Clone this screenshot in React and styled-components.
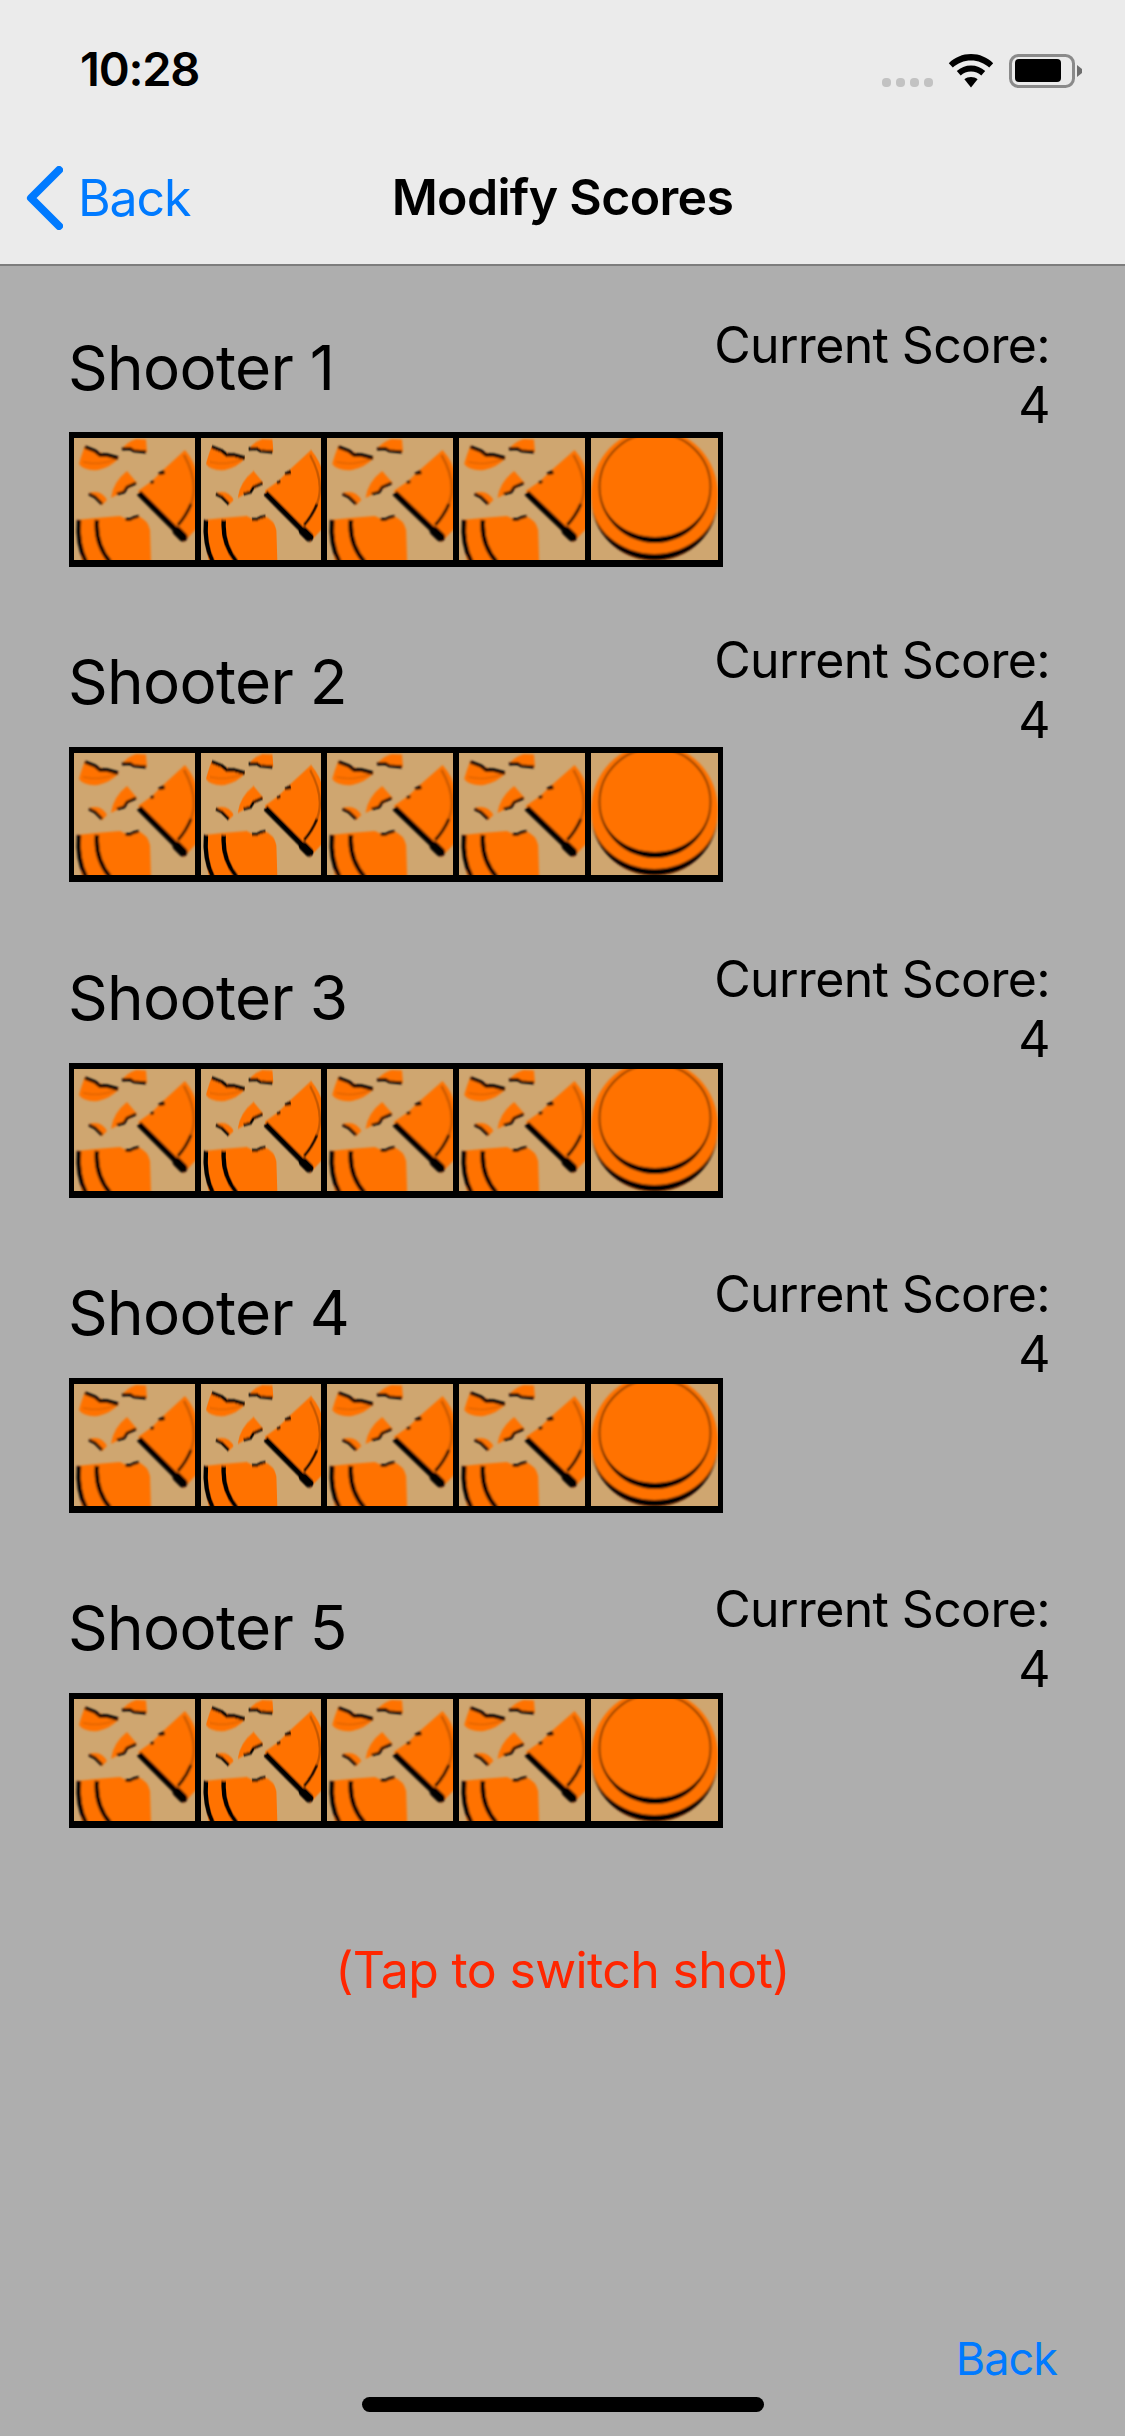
import React from "react";
import styled, { createGlobalStyle } from "styled-components";

const Global = createGlobalStyle`
  html, body { margin: 0; padding: 0; background: #aeaeae; }
  body { font-family: "Inter", "Liberation Sans", sans-serif; }
`;

const Screen = styled.div`
  position: relative;
  width: 1125px;
  height: 2436px;
  display: flex;
  flex-direction: column;
  background: #aeaeae;
  overflow: hidden;
`;
const TopBars = styled.header`
  background: #ebebeb;
  border-bottom: 2px solid #7d7d7d;
  height: 264px;
  box-sizing: content-box;
  display: flex;
  flex-direction: column;
`;
const StatusBar = styled.div`
  height: 132px;
  display: flex;
  align-items: center;
  justify-content: space-between;
  padding: 5px 43px 0 80px;
  box-sizing: border-box;
`;
const Time = styled.span`
  font-size: 47px;
  font-weight: 600;
  letter-spacing: -1.2px;
  color: #000;
`;
const StatusIcons = styled.div`
  display: flex;
  align-items: flex-end;
  gap: 15px;
  margin-top: 5px;
`;
const Dots = styled.div`
  display: flex;
  gap: 5px;
  margin-bottom: 1px;
`;
const Dot = styled.i`
  width: 9px;
  height: 9px;
  border-radius: 4px;
  background: #c2c2c2;
`;
const NavBar = styled.nav`
  position: relative;
  flex: 1;
  display: flex;
  align-items: center;
  justify-content: center;
  padding-top: 2px;
  padding-bottom: 4px;
`;
const NavBack = styled.div`
  position: absolute;
  left: 26px;
  top: 34px;
  display: flex;
  align-items: center;
  gap: 15px;
  color: #007aff;
  font-size: 50px;
  letter-spacing: -1.1px;
`;
const Title = styled.h1`
  margin: 0;
  font-size: 50px;
  font-weight: 600;
  letter-spacing: -0.65px;
  color: #000;
`;
const Rows = styled.main`
  display: flex;
  flex-direction: column;
  gap: 63.25px;
  padding: 49px 75px 0 69px;
`;
const Row = styled.section`
  display: flex;
  flex-direction: column;
`;
const RowHead = styled.div`
  height: 117px;
  display: flex;
  justify-content: space-between;
  align-items: flex-start;
`;
const Name = styled.div`
  font-size: 62px;
  line-height: 75px;
  padding-top: ${(p) => p.$top}px;
  margin-left: -1px;
  letter-spacing: -0.7px;
  color: #000;
`;
const Score = styled.div`
  font-size: 50px;
  line-height: 60px;
  padding-top: ${(p) => p.$top}px;
  letter-spacing: -0.65px;
  text-align: right;
  color: #000;
`;
const Strip = styled.div`
  width: 654px;
  height: 135px;
  box-sizing: border-box;
  background: #000;
  padding: 6px 5px 7px;
  display: flex;
  justify-content: space-between;
`;
const TileBox = styled.svg`
  display: block;
  width: ${(p) => p.$w}px;
  height: 122px;
  background: #cfa670;
`;
const Hint = styled.div`
  margin-top: 112px;
  text-align: center;
  font-size: 50px;
  letter-spacing: -0.65px;
  color: #ff2600;
`;
const Spacer = styled.div`
  flex: 1;
`;
const BottomBack = styled.div`
  align-self: flex-end;
  padding-right: 68px;
  margin-bottom: 50px;
  font-size: 45px;
  letter-spacing: -0.95px;
  color: #007aff;
`;
const HomeIndicator = styled.div`
  position: absolute;
  left: 362px;
  top: 2397px;
  width: 402px;
  height: 15px;
  border-radius: 8px;
  background: #000;
`;

const ORANGE = "#ff7200";

function Broken({ w, id }) {
  return (
    <TileBox $w={w} viewBox="0 0 121 122" preserveAspectRatio="none">
      <defs>
        <filter id={id} x="-5%" y="-5%" width="110%" height="110%">
          <feGaussianBlur stdDeviation="0.8" />
        </filter>
      </defs>
      <g filter={`url(#${id})`}>
        {/* fragment: upper left */}
        <path fill={ORANGE} d="M11 8 L22 13 L30 16 L45 20 Q37 29 24 32 Q10 33 5 26 Q8 15 11 8Z" />
        <path fill="none" stroke="#000" strokeWidth="3.400" d="M11 9 L21 13 L26 17 L33 17 L44 20" />
        <path fill="none" stroke="#000" strokeWidth="1" opacity=".2" d="M9 24 Q26 28 42 21" />
        {/* fragment: upper middle */}
        <path fill={ORANGE} d="M48 11 Q53 4 62 1 L72 1.500 L73 14 L62 12Z" />
        <path fill="none" stroke="#000" strokeWidth="2.800" d="M48 11 L56 10.500 L60 13 L72 14" />
        {/* fragment: centre */}
        <path fill={ORANGE} d="M37 60 Q39 44 53 33 L63 45 L50 53Z" />
        <path fill="none" stroke="#000" strokeWidth="2.800" d="M62 45 L53 49 L50 54 L43 56" />
        {/* fragment: tiny */}
        <path fill={ORANGE} d="M15 55 Q27 51 33 62 L28 67 L22 61Z" />
        <path fill="none" stroke="#000" strokeWidth="2.800" d="M15 56 L21 59 L28 66" />
        {/* wedge */}
        <path fill={ORANGE} d="M64 53 L78 43 L88 33 L111 12 Q121 24 123 36 L123 90 L110 104 L100 90Z" />
        <path fill="none" stroke="#000" strokeWidth="2.400" opacity=".22" d="M110 17 Q126 46 116 68" />
        <path fill="none" stroke="#000" strokeWidth="3" opacity=".85" d="M117 66 Q112 78 104 87" />
        <path fill="none" stroke="#000" strokeWidth="6" d="M65 55 L101 91" />
        <path fill="none" stroke="#000" strokeWidth="9" strokeLinecap="round" d="M103 93 L109 99" />
        <path fill="#000" d="M76 44 L80 42 L80 45 L77 46Z M84 35 L90 32 L91 36 L85 37Z" />
        {/* lower piece */}
        <path fill={ORANGE} d="M3 82 L22 80 L46 78 L52 81 L58 82 L64 78 Q74 82 76 92 L77 124 L8 124 Q3 100 3 82Z" />
        <path fill="none" stroke="#000" strokeWidth="4.400" d="M5 82 Q3 106 12 124" />
        <path fill="none" stroke="#000" strokeWidth="4.400" d="M23 82 Q21 106 36 124" />
        <path fill="#000" d="M51 80 L56 80 L60 78 L65 77 L65 79.500 L60 81 L56 83 L52 83Z" />
      </g>
    </TileBox>
  );
}

function Whole({ w, id }) {
  return (
    <TileBox $w={w} viewBox="0 0 127 122" preserveAspectRatio="none">
      <defs>
        <filter id={id} x="-5%" y="-5%" width="110%" height="110%">
          <feGaussianBlur stdDeviation="1.100" />
        </filter>
        <clipPath id={`${id}c`}>
          <rect width="127" height="122" />
        </clipPath>
      </defs>
      <g clipPath={`url(#${id}c)`}>
        <g filter={`url(#${id})`}>
          <ellipse cx="63.500" cy="57" rx="63.500" ry="66" fill={ORANGE} />
          <ellipse cx="64" cy="49" rx="55.500" ry="54" fill="none" stroke="#000" strokeWidth="1.800" opacity=".5" />
          <path fill="#000" d="M8.500 50 A55.500 55 0 0 0 119.500 50 A55.500 49 0 0 1 8.500 50Z" />
          <path fill="#000" d="M0 60 A63.500 62.500 0 0 0 127 60 A63.500 56 0 0 1 0 60Z" />
        </g>
      </g>
    </TileBox>
  );
}

const WIDTHS = [121, 120, 126, 126];
const NAME_TOPS = [15, 14, 14, 14, 14];
const SCORE_TOPS = [0, 0, 3, 3, 3];

function ShooterRow({ n }) {
  return (
    <Row>
      <RowHead>
        <Name $top={NAME_TOPS[n - 1]}>Shooter {n}</Name>
        <Score $top={SCORE_TOPS[n - 1]}>
          Current Score:
          <br />4
        </Score>
      </RowHead>
      <Strip>
        {WIDTHS.map((w, i) => (
          <Broken key={i} w={w} id={`b${n}${i}`} />
        ))}
        <Whole w={127} id={`w${n}`} />
      </Strip>
    </Row>
  );
}

export default function App() {
  return (
    <>
      <Global />
      <Screen>
        <TopBars>
          <StatusBar>
            <Time>10:28</Time>
            <StatusIcons>
              <Dots>
                {[0, 1, 2, 3].map((i) => (
                  <Dot key={i} />
                ))}
              </Dots>
              <svg width="46" height="34" viewBox="0 0 45 34">
                <path fill="#000" d="M22.500 0C14 0 6.400 3.300 0.300 9.200L4.300 13.600C9 9 15.400 6.400 22.500 6.400S36 9 40.700 13.600L44.700 9.200C38.600 3.300 31 0 22.500 0Z" />
                <path fill="#000" d="M22.500 11.500C17.100 11.500 12.200 13.500 8.300 17.100L12.200 21.400C15 19 18.400 17.600 22.500 17.600S30 19 32.800 21.400L36.700 17.100C32.800 13.500 27.900 11.500 22.500 11.500Z" />
                <path fill="#000" d="M22.500 23C20 23 17.700 23.800 15.900 25.300L22.500 33.500L29.100 25.300C27.300 23.800 25 23 22.500 23Z" />
              </svg>
              <svg width="73" height="34" viewBox="0 0 73 34">
                <rect x="1.500" y="1.500" width="63" height="31" rx="8" fill="none" stroke="#8a8a8a" strokeWidth="3" />
                <rect x="6" y="5" width="46" height="23" rx="4" fill="#000" />
                <path fill="#6e6e6e" d="M68 11 L73 15 L73 19 L68 23Z" />
              </svg>
            </StatusIcons>
          </StatusBar>
          <NavBar>
            <NavBack>
              <svg width="37" height="64" viewBox="0 0 37 64">
                <path fill="none" stroke="#007aff" strokeWidth="8" strokeLinecap="round" strokeLinejoin="round" d="M33 4 L5 32 L33 60" />
              </svg>
              Back
            </NavBack>
            <Title>Modify Scores</Title>
          </NavBar>
        </TopBars>
        <Rows>
          {[1, 2, 3, 4, 5].map((n) => (
            <ShooterRow key={n} n={n} />
          ))}
        </Rows>
        <Hint>(Tap to switch shot)</Hint>
        <Spacer />
        <BottomBack>Back</BottomBack>
        <HomeIndicator />
      </Screen>
    </>
  );
}
